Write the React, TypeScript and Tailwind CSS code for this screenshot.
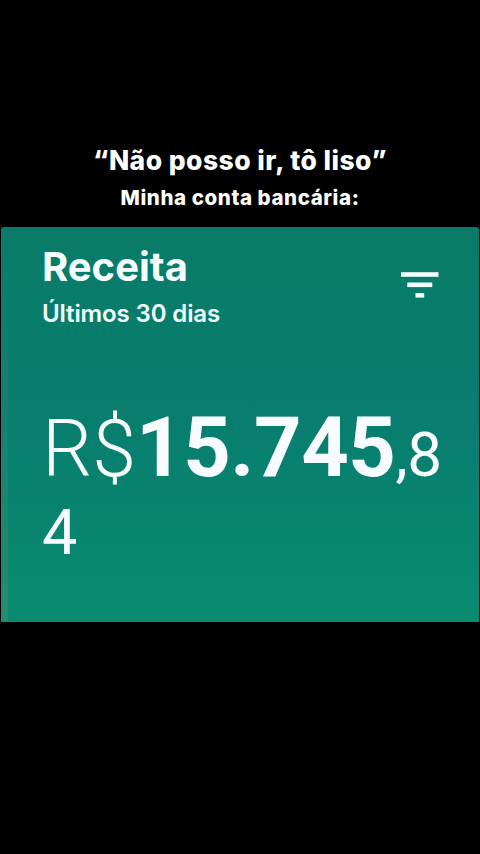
import React from 'react';

const FilterIcon: React.FC = () => (
    <svg width="38" height="26" viewBox="0 0 38 26" fill="#f4feff" aria-label="Filtrar">
        <rect x="0" y="0.2" width="37.5" height="4.6" />
        <rect x="6.3" y="10.5" width="25" height="4.6" />
        <rect x="14.5" y="21" width="8.7" height="4.6" />
    </svg>
);

const Caption: React.FC = () => (
    <header className="flex flex-col items-center pt-[144px] font-['Inter',sans-serif] font-extrabold text-white whitespace-nowrap">
        <h1 className="h-8 text-[26.5px] leading-8 tracking-[0.45px]">“Não posso ir, tô liso”</h1>
        <p className="h-[42px] text-[20.5px] leading-[43px] tracking-[0.58px]">Minha conta bancária:</p>
    </header>
);

const RevenueCard: React.FC = () => (
    <section className="relative mx-px mt-[9px] h-[395px] overflow-hidden rounded-t-[3px] bg-linear-to-b from-[#097b68] via-[#087e6f] to-[#088b70] pl-[41px] pt-4 text-[#f4feff]">
        {/* Lighter strip along the left edge */}
        <div className="absolute inset-y-0 left-0 w-[7px] bg-linear-to-b from-transparent to-[#5a8a6a]/40" />

        <div className="flex justify-between pr-10">
            <div className="font-['Inter',sans-serif] whitespace-nowrap">
                <h2 className="h-12 text-[40px] leading-[48px] font-bold">Receita</h2>
                <p className="h-11 text-[24px] leading-[45px] font-semibold tracking-[-0.12px]">Últimos 30 dias</p>
            </div>
            <button className="mt-[29px] h-[26px]">
                <FilterIcon />
            </button>
        </div>

        {/* Amount, the cents wrap onto a second line */}
        <div className="mt-[74px] font-['Roboto',sans-serif] text-[#f8fbff] whitespace-nowrap">
            <div className="flex h-[78px] items-baseline leading-[78px]">
                <span className="text-[79px] font-light">R$</span>
                <span className="text-[83px] font-bold tracking-[-0.45px]">15.745</span>
                <span className="text-[62px] tracking-[-0.5px]">,8</span>
            </div>
            <div className="mt-[7px] h-[78px] text-[63px] leading-[78px] tracking-tight">4</div>
        </div>
    </section>
);

const App: React.FC = () => {
    return (
        <main className="h-[854px] w-[480px] overflow-hidden bg-black">
            <Caption />
            <RevenueCard />
        </main>
    );
};

export default App;
